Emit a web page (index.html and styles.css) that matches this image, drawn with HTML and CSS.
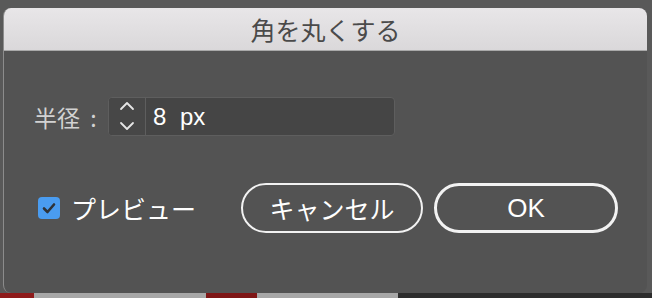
FILE: index.html
```html
<!DOCTYPE html>
<html lang="ja">
<head>
  <meta charset="UTF-8">
  <title>角を丸くする</title>
  <link rel="stylesheet" href="styles.css">
</head>
<body>
  <div class="desktop">
    <div class="dialog">
      <div class="title-bar">角を丸くする</div>

      <div class="dialog-body">
        <div class="radius-row">
          <label class="field-label" for="radius">半径 :</label>
          <div class="number-field">
            <span class="spinner">
              <svg width="16" height="34" viewBox="0 0 16 34">
                <path d="M2 9 L8 3 L14 9" fill="none" stroke="#e6e6e6" stroke-width="1.8" stroke-linecap="round" stroke-linejoin="round"/>
                <path d="M2 23 L8 29 L14 23" fill="none" stroke="#e6e6e6" stroke-width="1.8" stroke-linecap="round" stroke-linejoin="round"/>
              </svg>
            </span>
            <input id="radius" class="number-input" type="text" value="8 px">
          </div>
        </div>

        <div class="actions-row">
          <label class="preview">
            <span class="checkbox">
              <svg width="14" height="12" viewBox="0 0 14 12">
                <path d="M2 6.5 L5.5 10 L12 2.5" fill="none" stroke="#2f3338" stroke-width="2.6" stroke-linecap="round" stroke-linejoin="round"/>
              </svg>
            </span>
            プレビュー
          </label>
          <button class="btn" type="button">キャンセル</button>
          <button class="btn btn-default" type="button">OK</button>
        </div>
      </div>
    </div>
  </div>
</body>
</html>
```

FILE: styles.css
```css
body { margin: 0; font-family: "Noto Sans CJK JP", "Noto Sans", sans-serif; }

.desktop {
  width: 652px;
  height: 298px;
  box-sizing: border-box;
  padding: 8px 5px 0 3px;
  background:
    linear-gradient(to right, #8e1b1b 0 34px, #a7a7a7 34px 206px, #7e1616 206px 257px, #a7a7a7 257px 398px, #2d2d2d 398px) left bottom / 100% 5px no-repeat,
    #595959;
}

.dialog {
  height: 285px;
  background: #535353;
  border-radius: 8px;
  border-left: 1px solid #8c8c8c;
  overflow: hidden;
}

.title-bar {
  height: 42px;
  line-height: 42px;
  text-align: center;
  font-size: 25px;
  color: #4a4a4a;
  background: linear-gradient(#e8e6e8, #dad8da);
  border-bottom: 1px solid #a9a9a9;
}

.dialog-body { padding: 46px 20px 0 30px; }

.radius-row { display: flex; align-items: center; }
.field-label { flex: none; width: 74px; font-size: 23px; word-spacing: 5px; color: #d2d2d2; }

.number-field {
  flex: none;
  display: flex;
  width: 287px;
  height: 39px;
  box-sizing: border-box;
  border: 1px solid #5e5e5e;
  border-radius: 4px;
  background: #454545;
  overflow: hidden;
}
.spinner {
  flex: none;
  width: 36px;
  display: flex;
  align-items: center;
  justify-content: center;
  border-right: 1px solid #5e5e5e;
  background: #474747;
}
.number-input {
  flex: 1;
  min-width: 0;
  border: 0;
  outline: 0;
  background: transparent;
  padding: 0 0 0 7px;
  font-family: "Liberation Sans", sans-serif;
  font-size: 24px;
  word-spacing: 7px;
  color: #ffffff;
}

.actions-row { display: flex; align-items: center; margin-top: 47px; }

.preview {
  flex: none;
  display: flex;
  align-items: center;
  gap: 11px;
  margin-left: 4px;
  width: 203px;
  font-size: 25px;
  color: #ffffff;
}
.checkbox {
  width: 22px;
  height: 22px;
  border-radius: 4px;
  background: #4a9cf0;
  display: flex;
  align-items: center;
  justify-content: center;
}

.btn {
  flex: none;
  width: 182px;
  height: 50px;
  border: 2px solid #f2f2f2;
  border-radius: 25px;
  background: transparent;
  font-family: "Noto Sans CJK JP", sans-serif;
  font-size: 25px;
  color: #ffffff;
}
.btn-default {
  width: 184px;
  margin-left: 11px;
  border-width: 3px;
  font-family: "Liberation Sans", sans-serif;
  font-size: 26px;
}
```
